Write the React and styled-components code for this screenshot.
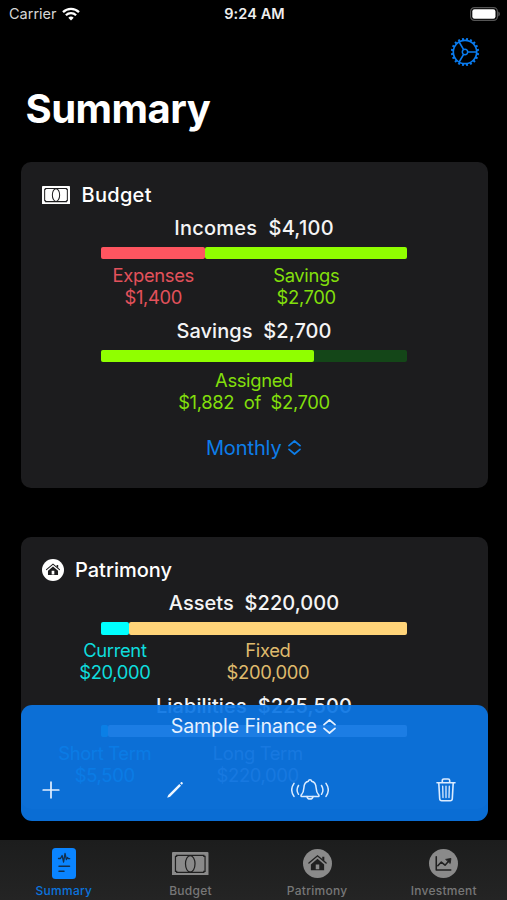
import React from "react";
import styled, { createGlobalStyle } from "styled-components";

const GlobalStyle = createGlobalStyle`
  * {
    box-sizing: border-box;
  }
  body {
    margin: 0;
    background: #000;
    font-family: Inter, "Liberation Sans", sans-serif;
  }
  svg {
    display: block;
    flex-shrink: 0;
  }
`

const Screen = styled.div`
  position: relative;
  display: flex;
  flex-direction: column;
  width: 507px;
  height: 900px;
  overflow: hidden;
  background: #000;
  color: #f4f4f5;
`

const StatusBar = styled.div`
  display: grid;
  grid-template-columns: 1fr auto 1fr;
  align-items: center;
  height: 27px;
  padding: 0 7px 0 9px;
`

const Carrier = styled.div`
  display: flex;
  align-items: center;
  gap: 5px;
  font-size: 14.5px;
  color: #d6d6d6;
`

const Clock = styled.div`
  font-size: 14.5px;
  font-weight: 600;
  letter-spacing: 0.1px;
  color: #eee;
`

const BatteryBox = styled.div`
  display: flex;
  justify-content: flex-end;
`

const NavBar = styled.div`
  display: flex;
  justify-content: flex-end;
  align-items: center;
  height: 51px;
  padding: 0 27px 1px 0;
`

const Title = styled.h1`
  margin: 0;
  height: 84px;
  padding: 7px 0 0 25.5px;
  font-size: 40px;
  line-height: 48px;
  font-weight: 700;
  letter-spacing: -0.5px;
  color: #fff;
`

const Content = styled.div`
  flex: 1;
  min-height: 0;
  overflow: hidden;
  display: flex;
  flex-direction: column;
  gap: 49.1px;
  padding: 0 19.5px 0 20.5px;
`

const Card = styled.div`
  flex-shrink: 0;
  height: ${(props) => props.$height}px;
  padding-top: 20.6px;
  border-radius: 10px;
  background: #1c1c1e;
`

const CardHeader = styled.div`
  display: flex;
  align-items: center;
  gap: ${(props) => props.$gap}px;
  height: 24px;
  padding-left: 21px;
  font-size: 20px;
  font-weight: 500;
  line-height: 24px;
  letter-spacing: ${(props) => props.$spacing || 0}px;
  color: #fff;
`

const Group = styled.div`
  width: 306px;
  margin: ${(props) => props.$top || 9.6}px auto 0;
`

const GroupTitle = styled.div`
  display: flex;
  justify-content: center;
  height: 24px;
  font-size: 20px;
  font-weight: 500;
  line-height: 24px;
  letter-spacing: ${(props) => props.$spacing || 0.05}px;
  white-space: pre;
`

const Bar = styled.div`
  display: flex;
  height: 12.5px;
  margin-top: 6.8px;
  border-radius: 2px;
  background: ${(props) => props.$track || "transparent"};
`

const Segment = styled.div`
  height: 100%;
  border-radius: 2px;
  background: ${(props) => props.$color};
`

const Legends = styled.div`
  display: flex;
  margin-top: ${(props) => props.$top || 5.5}px;
`

const Legend = styled.div`
  display: flex;
  flex-direction: column;
  align-items: center;
  flex-shrink: 0;
  height: 43.5px;
  font-size: 18.4px;
  line-height: 21.75px;
  letter-spacing: -0.35px;
  white-space: pre;
  color: ${(props) => props.$color};
`

const Picker = styled.div`
  display: flex;
  justify-content: center;
  align-items: center;
  gap: 6px;
  height: 24px;
  margin-top: ${(props) => props.$top}px;
  padding-right: 1.5px;
  font-size: ${(props) => props.$size}px;
  line-height: 24px;
  letter-spacing: -0.1px;
  color: ${(props) => props.$color};
`

const FinancePanel = styled.div`
  position: absolute;
  left: 20.5px;
  top: 704.5px;
  width: 467px;
  height: 116px;
  padding-top: 9.5px;
  border-radius: 11px;
  background: rgba(11, 117, 228, 0.93);
`

const Actions = styled.div`
  display: flex;
  justify-content: space-between;
  align-items: center;
  height: 28px;
  margin-top: 38px;
  padding: 0 31.5px 0 21px;
`

const TabBar = styled.div`
  display: grid;
  grid-template-columns: repeat(4, 1fr);
  flex-shrink: 0;
  height: 60px;
  padding-left: 0.6px;
  background: linear-gradient(#1c1d1d, #242424);
`

const Tab = styled.div`
  display: flex;
  flex-direction: column;
  align-items: center;
  color: ${(props) => (props.$active ? "#0a84ff" : "#8a8a8a")};
`

const TabIcon = styled.div`
  display: flex;
  align-items: center;
  height: 47px;
`

const TabLabel = styled.div`
  margin-top: -3px;
  font-size: 12px;
  line-height: 14px;
  font-weight: 500;
  letter-spacing: 0.25px;
  color: ${(props) => (props.$active ? "#0b74dd" : "#777")};
`

const WifiIcon = () => (
  <svg width="18" height="14" viewBox="0 0 18 14" fill="none" stroke="#fff" strokeWidth="2.3">
    <path d="M1 5.2a11.5 11.5 0 0 1 16 0" />
    <path d="M3.9 8.3a7.3 7.3 0 0 1 10.2 0" />
    <path d="M9 13.4 6.3 10.7a3.9 3.9 0 0 1 5.4 0z" fill="#fff" stroke="none" />
  </svg>
)

const BatteryIcon = () => (
  <svg width="30" height="14" viewBox="0 0 30 14">
    <rect x="0.6" y="0.6" width="26.8" height="12.8" rx="3.8" fill="none" stroke="#555" strokeWidth="1.2" />
    <rect x="2.3" y="2.2" width="23.2" height="9.6" rx="2.2" fill="#fff" />
    <path d="M28.4 4.6c1.8.8 1.8 4 0 4.8z" fill="#666" />
  </svg>
)

const teeth = Array.from({ length: 20 }, (_, i) => i * 18 + 9)

const GearIcon = () => (
  <svg width="30" height="30" viewBox="-15 -15 30 30" fill="none" stroke="#0a7cf0" strokeWidth="1.7">
    <circle r="11.7" />
    <circle r="2.7" strokeWidth="1.5" />
    <path d="M2.8 0H11.5M-1.4 -2.4-5.9 -10.1M-1.4 2.4-5.9 10.1" />
    {teeth.map((deg) => (
      <path key={deg} d="M12 0H14.1" strokeWidth="2" transform={`rotate(${deg})`} />
    ))}
  </svg>
)

const BanknoteIcon = ({ width, ink, line = 1.2 }) => (
  <svg width={width} height={(width * 23.4) / 36} viewBox="0 0 36 23.4">
    <rect width="36" height="23.4" rx="1" fill="currentColor" />
    <g fill="none" stroke={ink} strokeWidth={line}>
      <path d="M4.6 3.3H31.4V4.3H32.6V19.1H31.4V20.1H4.6V19.1H3.4V4.3H4.6z" />
      <ellipse cx="18" cy="11.7" rx="4.7" ry="8.2" />
    </g>
  </svg>
)

const HouseIcon = ({ size, ink }) => (
  <svg width={size} height={size} viewBox="0 0 28 28">
    <circle cx="14" cy="14" r="14" fill="currentColor" />
    <path d="M5.7 13.6 14 6.6l8.3 7" fill="none" stroke={ink} strokeWidth="1.3" strokeLinecap="round" />
    <path d="M18.6 7.5h2v4.2l-2-1.7z" fill={ink} />
    <path d="M14 9.4l6.4 5.5v5.6H7.6v-5.6z" fill={ink} />
    <path d="M12.3 15h3.4v4.6h-3.4z" fill="currentColor" />
  </svg>
)

const ChartIcon = () => (
  <svg width="29" height="29" viewBox="0 0 28 28">
    <circle cx="14" cy="14" r="14" fill="currentColor" />
    <g fill="none" stroke="#202020" strokeWidth="1.5" strokeLinejoin="round" strokeLinecap="round">
      <path d="M7 7.5V20.2H21" />
      <path d="M8.5 16.2l3.4-3.6 3.6 3 4-4.4" />
      <path d="M16.4 10l4.8-.9-.7 4.6z" fill="#202020" strokeWidth="0.8" />
    </g>
  </svg>
)

const ReportIcon = () => (
  <svg width="24" height="31" viewBox="0 0 24 31">
    <rect width="24" height="31" rx="3.5" fill="currentColor" />
    <g fill="none" stroke="#12304f" strokeWidth="1.5" strokeLinecap="round" strokeLinejoin="round">
      <path d="M6.5 10.5h2l1.6-3 1.5 6.5L13 5.5l1.4 6 1.2-2 .7 1.2h1.4" strokeWidth="1.3" />
      <path d="M7 18.3H17.5M7 23.3H12" />
    </g>
  </svg>
)

const ChevronsIcon = ({ width = 1.7 }) => (
  <svg width="13" height="15" viewBox="0 0 13 15" fill="none" stroke="currentColor" strokeWidth={width} strokeLinecap="round" strokeLinejoin="round">
    <path d="M1 5.7 6.5 1 12 5.7M1 9.3 6.5 14 12 9.3" />
  </svg>
)

const PlusIcon = () => (
  <svg width="18" height="18" viewBox="0 0 18 18" stroke="#e4f0ff" strokeWidth="1.7" strokeLinecap="round">
    <path d="M9 1.2V16.8M1.2 9H16.8" />
  </svg>
)

const PencilIcon = () => (
  <svg width="18" height="18" viewBox="0 0 18 18" fill="#f0f7ff">
    <path d="M1.2 16.8l1.1-2.9L13.3 3l1.7 1.7L4.1 15.700z" />
    <path d="M14.1 2.2l.9-.9c.9-.8 2.5.8 1.6 1.600l-.9.9z" />
  </svg>
)

const BellIcon = () => (
  <svg width="38" height="24" viewBox="0 0 38 24" fill="none" stroke="#dcecff" strokeWidth="1.5" strokeLinecap="round" strokeLinejoin="round">
    <path d="M10.6 18.4c-.8 0-.8-1-.3-1.5 1.9-2 2.4-3.2 2.6-7.2.2-4 2.2-6 4.5-6.5.3-2 2.9-2 3.2 0 2.3.5 4.3 2.5 4.5 6.5.2 4 .7 5.2 2.6 7.2.5.5.5 1.5-.3 1.5z" />
    <path d="M16 18.6c.4 3.3 5.6 3.3 6 0" />
    <path d="M7.5 7.5c-1.7 2.6-1.7 6.2 0 8.8M3 5.4c-2.8 4-2.8 9 0 13M30.5 7.5c1.7 2.6 1.7 6.2 0 8.8M35 5.4c2.8 4 2.8 9 0 13" />
  </svg>
)

const TrashIcon = () => (
  <svg width="20" height="24" viewBox="0 0 20 24" fill="none" stroke="#dcecff" strokeWidth="1.6" strokeLinecap="round" strokeLinejoin="round">
    <path d="M1 4.8H19M6.3 4.6V2.6C6.3 1.6 6.9 1 7.9 1h4.2c1 0 1.6.6 1.6 1.6v2" />
    <path d="M2.8 5l.9 15.7c.1 1.3.8 2 2 2h8.6c1.2 0 1.9-.7 2-2L17.2 5" />
    <path d="M6.7 8.2l.3 11.3M10 8.2v11.3M13.3 8.2l-.3 11.3" strokeWidth="1.3" />
  </svg>
)

const incomes = [
  { label: "Expenses", amount: 1400, color: "#ff5560", text: "#e2515b" },
  { label: "Savings", amount: 2700, color: "#90ff00", text: "#82df0c" },
]

const assets = [
  { label: "Current", amount: 20000, color: "#00ffff", text: "#0fdcdd" },
  { label: "Fixed", amount: 200000, color: "#ffd479", text: "#dfba6d" },
]

const liabilities = [
  { label: "Short Term", amount: 5500, color: "#0affff", text: "#0cc8ee" },
  { label: "Long Term", amount: 220000, color: "#ffd8d8", text: "#b8a0a4" },
]

const money = (value) => "$" + value.toLocaleString("en-US")

const Breakdown = ({ title, total, items, spacing, top }) => {
  const width = (item) => ({ width: (item.amount / total) * 100 + "%" })
  return (
    <Group $top={top}>
      <GroupTitle $spacing={spacing}>{`${title}  ${money(total)}`}</GroupTitle>
      <Bar>
        {items.map((item) => (
          <Segment key={item.label} $color={item.color} style={width(item)} />
        ))}
      </Bar>
      <Legends>
        {items.map((item) => (
          <Legend key={item.label} $color={item.text} style={width(item)}>
            <span>{item.label}</span>
            <span>{money(item.amount)}</span>
          </Legend>
        ))}
      </Legends>
    </Group>
  )
}

const Assigned = ({ amount, total }) => (
  <Group $top={10.6}>
    <GroupTitle>{`Savings  ${money(total)}`}</GroupTitle>
    <Bar $track="#144618">
      <Segment $color="#90ff00" style={{ width: (amount / total) * 100 + "%" }} />
    </Bar>
    <Legends $top={7.6}>
      <Legend $color="#82df0c" style={{ width: "100%" }}>
        <span>Assigned</span>
        <span>{`${money(amount)}  of  ${money(total)}`}</span>
      </Legend>
    </Legends>
  </Group>
)

const tabs = [
  { label: "Summary", icon: <ReportIcon />, active: true },
  { label: "Budget", icon: <BanknoteIcon width={36.5} ink="#202020" /> },
  { label: "Patrimony", icon: <HouseIcon size={29} ink="#202020" /> },
  { label: "Investment", icon: <ChartIcon /> },
]

const App = () => {
  return (
    <Screen>
      <GlobalStyle />
      <StatusBar>
        <Carrier>
          Carrier
          <WifiIcon />
        </Carrier>
        <Clock>9:24 AM</Clock>
        <BatteryBox>
          <BatteryIcon />
        </BatteryBox>
      </StatusBar>
      <NavBar>
        <GearIcon />
      </NavBar>
      <Title>Summary</Title>
      <Content>
        <Card $height={326}>
          <CardHeader $gap={12} $spacing={0.3}>
            <BanknoteIcon width={28} ink="#1c1c1e" line={1.3} />
            Budget
          </CardHeader>
          <Breakdown title="Incomes" total={4100} items={incomes} spacing={0.25} />
          <Assigned amount={1882} total={2700} />
          <Picker $top={22.5} $size={20} $color="#0d7eea">
            Monthly
            <ChevronsIcon />
          </Picker>
        </Card>
        <Card $height={272}>
          <CardHeader $gap={11.5}>
            <HouseIcon size={22} ink="#1c1c1e" />
            Patrimony
          </CardHeader>
          <Breakdown title="Assets" total={220000} items={assets} />
          <Breakdown title="Liabilities" total={225500} items={liabilities} spacing={0.12} top={10.6} />
        </Card>
      </Content>
      <FinancePanel>
        <Picker $top={0} $size={19.6} $color="#e6f1ff">
          Sample Finance
          <ChevronsIcon />
        </Picker>
        <Actions>
          <PlusIcon />
          <PencilIcon />
          <BellIcon />
          <TrashIcon />
        </Actions>
      </FinancePanel>
      <TabBar>
        {tabs.map((tab) => (
          <Tab key={tab.label} $active={tab.active}>
            <TabIcon>{tab.icon}</TabIcon>
            <TabLabel $active={tab.active}>{tab.label}</TabLabel>
          </Tab>
        ))}
      </TabBar>
    </Screen>
  )
}

export default App
